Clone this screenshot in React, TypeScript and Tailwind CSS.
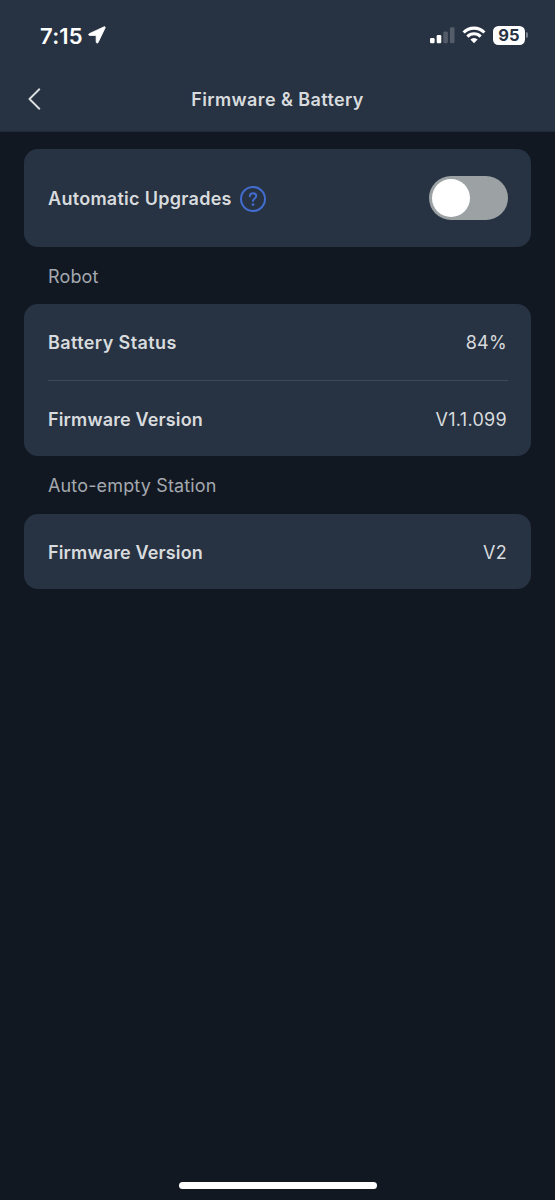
import React from 'react';

const StatusBar: React.FC = () => (
  <div className="flex h-[67px] items-start justify-between pl-10 pr-[27px] text-white">
    <div className="flex h-[70px] items-center">
      <span className="w-[43px] whitespace-nowrap pt-px text-[22px] font-semibold leading-none tracking-[0.2px]">7:15</span>
      <svg width="18" height="18" viewBox="0 0 18 18" fill="currentColor" stroke="currentColor" strokeWidth="0.8" strokeLinejoin="round" className="ml-[5px]">
        <path d="M16.1.8 1.2 7.7C.3 8.2.5 9.3 1.5 9.4l6.2.1c.3 0 .4.1.4.4l.1 6.1c0 1.2 1.4 1.4 1.9.5L17.1 1.9c.4-.8-.2-1.5-1-1.1Z" />
      </svg>
    </div>
    <div className="flex h-[70px] items-center">
      <svg width="25" height="17" viewBox="0 0 25 17" fill="currentColor">
        <rect x="0" y="11" width="4.6" height="5.3" rx="1.2" />
        <rect x="6.7" y="8" width="4.6" height="8.3" rx="1.2" />
        <rect x="13.3" y="4.6" width="4.6" height="11.7" rx="1.2" fill="#535c68" />
        <rect x="19.9" y="0.3" width="4.6" height="16" rx="1.2" fill="#535c68" />
      </svg>
      <svg width="24" height="18" viewBox="0 0 24 18" className="ml-[7px]" fill="none" stroke="currentColor" strokeWidth="3.1">
        <path d="M1.6 6.5a14.6 14.6 0 0 1 20.8 0" />
        <path d="M5.4 10.6a9.2 9.2 0 0 1 13.2 0" />
        <path d="M12 17.2 8.4 13.6a4.9 4.9 0 0 1 7.2 0Z" fill="currentColor" stroke="none" />
      </svg>
      <div className="ml-[7px] flex h-[19px] w-8 items-center justify-center rounded-[5.5px] bg-white text-[16.5px] font-bold leading-none tracking-normal text-[#273242]">
        95
      </div>
      <div className="ml-px h-1.5 w-0.5 rounded-r-full bg-[#7a828c]" />
    </div>
  </div>
);

const Header: React.FC = () => (
  <header className="h-[132px] border-b border-[#202a38] bg-[#273242]">
    <StatusBar />
    <div className="grid h-16 grid-cols-[60px_1fr_60px] items-center">
      <button aria-label="Back" className="pl-7 text-[#dcdfe2]">
        <svg width="14" height="22" viewBox="0 0 14 22" fill="none" stroke="currentColor" strokeWidth="1.9" strokeLinecap="round" strokeLinejoin="round">
          <path d="M11.3 1.3 1.5 11l9.8 9.7" />
        </svg>
      </button>
      <h1 className="text-center font-semibold tracking-[0.4px]">Firmware &amp; Battery</h1>
    </div>
  </header>
);

const Row: React.FC<{ label: string; value: string; className: string }> = ({ label, value, className }) => (
  <div className={`flex items-center justify-between ${className}`}>
    <span className="font-semibold">{label}</span>
    <span className="font-normal tracking-[0.3px]">{value}</span>
  </div>
);

const SectionTitle: React.FC<{ children: React.ReactNode; className: string }> = ({ children, className }) => (
  <h2 className={`flex items-center pl-6 tracking-[0.15px] text-[#a4a8ae] ${className}`}>{children}</h2>
);

export default function App() {
  return (
    <div className="flex h-[1200px] w-full flex-col bg-[#111822] font-['Inter','Liberation_Sans',sans-serif] text-[18px] tracking-[0.25px] text-[#d8dbdd]">
      <Header />

      <main className="flex-1 px-6 pt-[17px]">
        <section className="flex h-[98px] items-center justify-between rounded-[14px] bg-[#273242] pl-6 pr-[23px]">
          <div className="flex items-center">
            <span className="font-semibold tracking-[0.28px]">Automatic Upgrades</span>
            <svg width="26" height="26" viewBox="0 0 26 26" fill="none" stroke="#426cce" strokeWidth="2" className="relative top-px ml-2">
              <circle cx="13" cy="13" r="12" />
              <path d="M9.8 10.2c.1-1.8 1.4-2.9 3.2-2.9s3.2 1.1 3.2 2.7c0 1.4-.8 2-1.8 2.8-1 .7-1.4 1.2-1.4 2.3" strokeLinecap="round" />
              <circle cx="13" cy="18.6" r="1.4" fill="#426cce" stroke="none" />
            </svg>
          </div>
          <button role="switch" aria-checked="false" aria-label="Automatic Upgrades" className="flex h-11 w-[79px] items-center rounded-full bg-[#9ca2a4] pl-[2.5px]">
            <span className="size-[38.5px] rounded-full bg-white" />
          </button>
        </section>

        <SectionTitle className="h-[57px] pt-0.5">Robot</SectionTitle>
        <section className="rounded-[14px] bg-[#273242] px-6">
          <Row label="Battery Status" value="84%" className="h-[76px] tracking-[0.4px]" />
          <div className="-mr-px h-px bg-[#3e4856]" />
          <Row label="Firmware Version" value="V1.1.099" className="h-[75px] pt-0.5 tracking-[0.15px]" />
        </section>

        <SectionTitle className="h-[58px] pt-px">Auto-empty Station</SectionTitle>
        <section className="rounded-[14px] bg-[#273242] px-6">
          <Row label="Firmware Version" value="V2" className="h-[75px] pt-px tracking-[0.15px]" />
        </section>
      </main>

      <div className="mx-auto mb-[11.5px] h-[7px] w-[198px] rounded-full bg-white" />
    </div>
  );
}
